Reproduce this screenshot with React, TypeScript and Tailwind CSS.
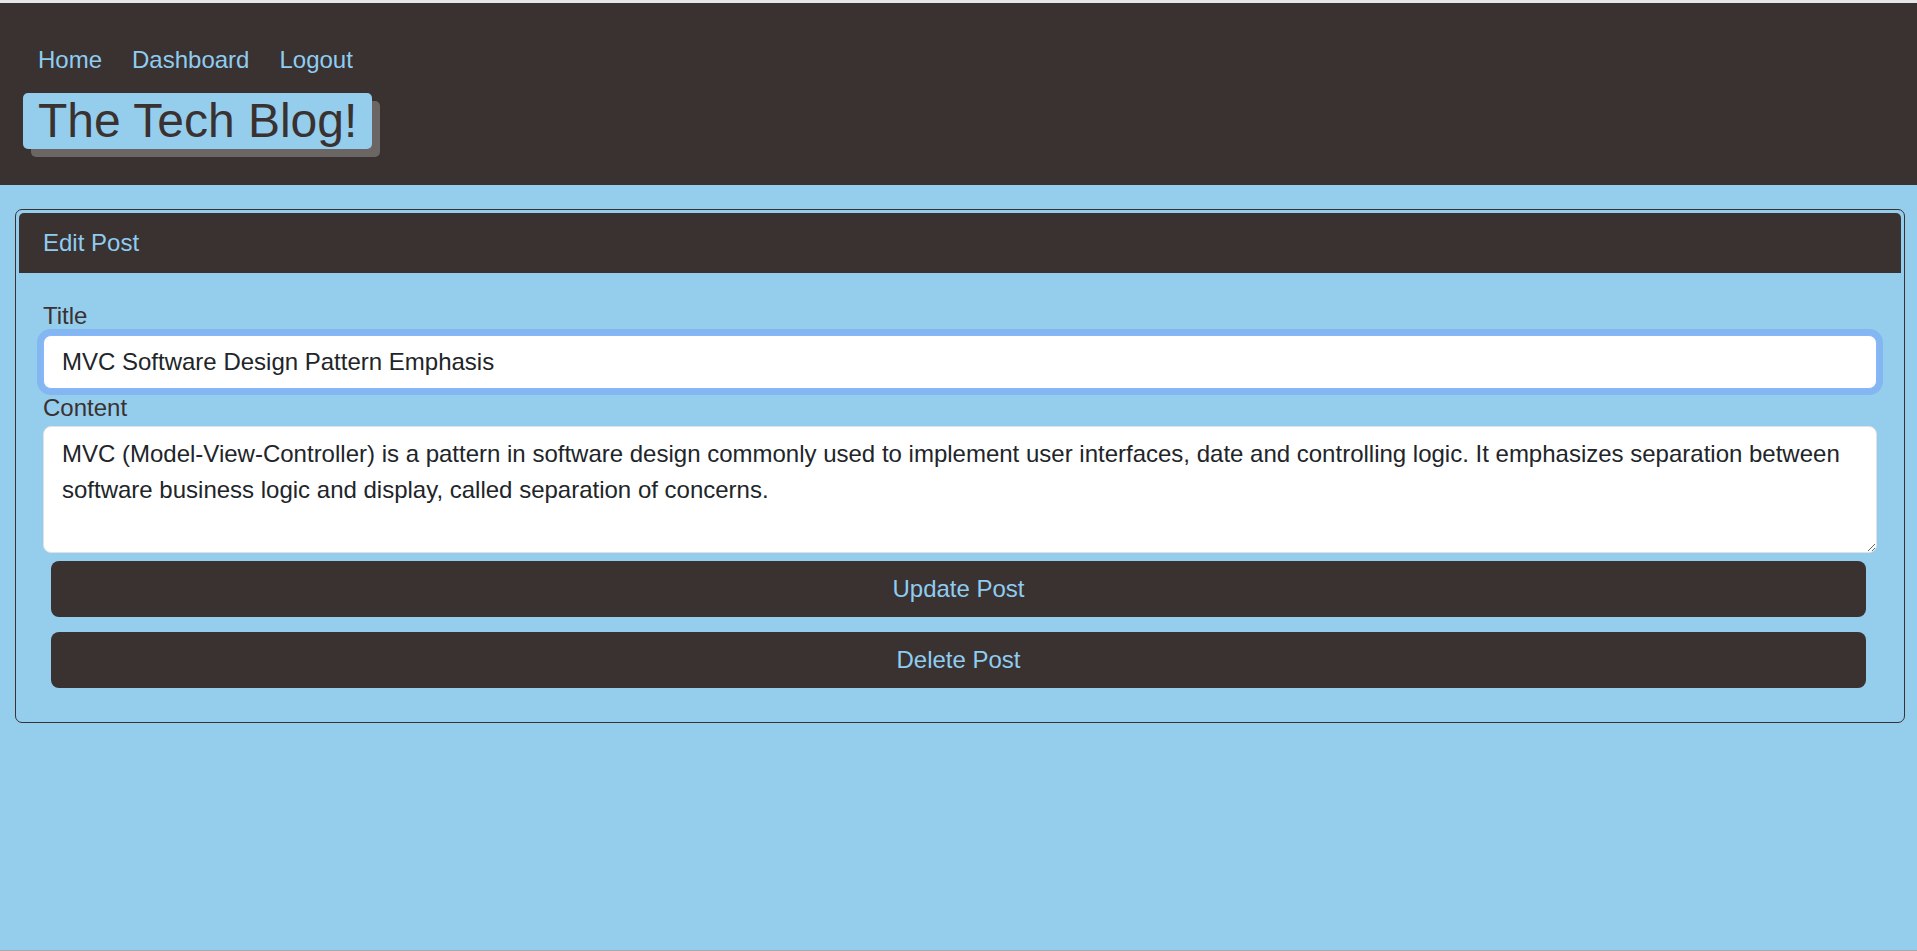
import React, { useEffect, useRef } from "react";

const NAV_LINKS = ["Home", "Dashboard", "Logout"];

const App = () => {
  const titleRef = useRef<HTMLInputElement>(null);

  useEffect(() => {
    const el = titleRef.current;
    if (el) {
      el.focus();
      el.setSelectionRange(el.value.length, el.value.length);
    }
  }, []);

  return (
    <div className="min-h-[951px] flex flex-col bg-[#95cdec] font-['Liberation_Sans',Arial,sans-serif] text-[24px] leading-[36px]">
      <div className="h-[3px] bg-[#e6e6e6]" />
      <header className="h-[182px] bg-[#3a3131] pt-[39px] pl-[23px]">
        <nav className="flex gap-[30px] pl-[15px]">
          {NAV_LINKS.map((link) => (
            <a key={link} href="#" className="text-[#8fcdf0] no-underline">
              {link}
            </a>
          ))}
        </nav>
        <div className="mt-[15px] flex">
          <h1 className="bg-[#95cdec] text-[#3a3131] text-[48px] leading-[56px] pl-[15px] pr-[15px] rounded-[5px] shadow-[8px_8px_0_#6b6563]">
            The Tech Blog!
          </h1>
        </div>
      </header>

      <main className="flex-1 pt-[24px] pl-[15px] pr-[12px] border-b border-[#a9a9a9]">
        <div className="border border-[#3a3131] rounded-[7px] p-[3px]">
          <div className="bg-[#3a3131] text-[#8fcdf0] py-[12px] pl-[24px] rounded-t-[5px]">
            Edit Post
          </div>
          <form className="flex flex-col px-[24px] pt-[25px] pb-[31px]">
            <label className="text-[#3a3131]">Title</label>
            <input
              ref={titleRef}
              type="text"
              defaultValue="MVC Software Design Pattern Emphasis"
              className="mt-[1px] h-[54px] w-full bg-white rounded-[8px] border border-[#86b7fe] px-[18px] text-[#212529] caret-[#212529] outline-none ring-[6px] ring-[#84b6f1]"
            />
            <label className="text-[#3a3131] mt-[1px]">Content</label>
            <textarea
              defaultValue="MVC (Model-View-Controller) is a pattern in software design commonly used to implement user interfaces, date and controlling logic. It emphasizes separation between software business logic and display, called separation of concerns."
              className="h-[127px] w-full bg-white rounded-[8px] border border-[#dee2e6] px-[18px] py-[9px] text-[#212529] outline-none"
            />
            <div className="flex flex-col gap-[15px] mt-[8px] ml-[8px] mr-[11px]">
              <button
                type="button"
                className="h-[56px] bg-[#3a3131] text-[#8fcdf0] rounded-[8px]"
              >
                Update Post
              </button>
              <button
                type="button"
                className="h-[56px] bg-[#3a3131] text-[#8fcdf0] rounded-[8px]"
              >
                Delete Post
              </button>
            </div>
          </form>
        </div>
      </main>
    </div>
  );
};

export default App;
